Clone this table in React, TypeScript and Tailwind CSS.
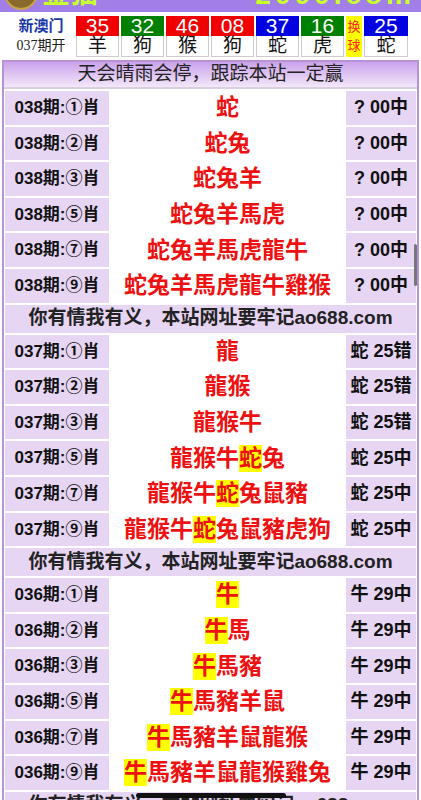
import React from "react";

type Ball = { n: string; a: string; c: string };

const balls: Ball[] = [
  { n: "35", a: "羊", c: "bg-[#f00000]" },
  { n: "32", a: "狗", c: "bg-[#008000]" },
  { n: "46", a: "猴", c: "bg-[#f00000]" },
  { n: "08", a: "狗", c: "bg-[#f00000]" },
  { n: "37", a: "蛇", c: "bg-[#0000e0]" },
  { n: "16", a: "虎", c: "bg-[#008000]" },
];

type Row = { label: string; pre?: string; hi?: string; rest: string; res: string };

const groups: { rows: Row[]; title: string }[] = [
  {
    rows: [
      { label: "038期:①肖", rest: "蛇", res: "? 00中" },
      { label: "038期:②肖", rest: "蛇兔", res: "? 00中" },
      { label: "038期:③肖", rest: "蛇兔羊", res: "? 00中" },
      { label: "038期:⑤肖", rest: "蛇兔羊馬虎", res: "? 00中" },
      { label: "038期:⑦肖", rest: "蛇兔羊馬虎龍牛", res: "? 00中" },
      { label: "038期:⑨肖", rest: "蛇兔羊馬虎龍牛雞猴", res: "? 00中" },
    ],
    title: "你有情我有义，本站网址要牢记ao688.com",
  },
  {
    rows: [
      { label: "037期:①肖", rest: "龍", res: "蛇 25错" },
      { label: "037期:②肖", rest: "龍猴", res: "蛇 25错" },
      { label: "037期:③肖", rest: "龍猴牛", res: "蛇 25错" },
      { label: "037期:⑤肖", pre: "龍猴牛", hi: "蛇", rest: "兔", res: "蛇 25中" },
      { label: "037期:⑦肖", pre: "龍猴牛", hi: "蛇", rest: "兔鼠豬", res: "蛇 25中" },
      { label: "037期:⑨肖", pre: "龍猴牛", hi: "蛇", rest: "兔鼠豬虎狗", res: "蛇 25中" },
    ],
    title: "你有情我有义，本站网址要牢记ao688.com",
  },
  {
    rows: [
      { label: "036期:①肖", hi: "牛", rest: "", res: "牛 29中" },
      { label: "036期:②肖", hi: "牛", rest: "馬", res: "牛 29中" },
      { label: "036期:③肖", hi: "牛", rest: "馬豬", res: "牛 29中" },
      { label: "036期:⑤肖", hi: "牛", rest: "馬豬羊鼠", res: "牛 29中" },
      { label: "036期:⑦肖", hi: "牛", rest: "馬豬羊鼠龍猴", res: "牛 29中" },
      { label: "036期:⑨肖", hi: "牛", rest: "馬豬羊鼠龍猴雞兔", res: "牛 29中" },
    ],
    title: "你有情我有义，本站网址要牢记ao688.com",
  },
];

const font = { fontFamily: '"Liberation Sans", "Noto Sans CJK SC", sans-serif' };

function DataRow({ r }: { r: Row }) {
  return (
    <div className="flex h-[33.6px] gap-[3px]">
      <div className="w-[104px] flex items-center justify-center bg-[#e6d5f3] text-[17px] font-bold text-[#111]">
        {r.label}
      </div>
      <div className="flex-1 flex items-center justify-center bg-white text-[23px] font-bold text-[#ee1111] leading-none">
        {r.pre}
        {r.hi && <span className="bg-[#ffff00] py-[2px]">{r.hi}</span>}
        {r.rest}
      </div>
      <div className="w-[70px] flex items-center justify-center bg-[#e6d5f3] text-[18px] font-bold text-[#111]">
        {r.res}
      </div>
    </div>
  );
}

export default function App() {
  return (
    <div className="relative w-[421px] h-[800px] overflow-hidden bg-white" style={font}>
      {/* top banner, mostly scrolled off */}
      <div className="relative h-[12px] bg-[#a27ee9] overflow-hidden">
        <div className="absolute left-[4px] top-[-24px] w-[34px] h-[34px] rounded-full bg-[#8a6a2a] border-2 border-[#c9a44a]" />
        <div className="absolute left-[42px] top-[-20px] text-[28px] font-bold text-[#c8ff2a] leading-none">
          金猫
        </div>
        <div className="absolute right-[6px] top-[-19px] text-[28px] font-bold tracking-[4px] text-[#c8ff2a] leading-none">
          2000.com
        </div>
      </div>

      {/* draw results */}
      <div className="flex items-center h-[48px] pl-[10px] gap-[4px]">
        <div className="w-[62px] flex flex-col items-center">
          <div className="text-[15px] font-bold text-[#1a37a8] leading-[20px]">新澳门</div>
          <div className="text-[14px] text-[#222] leading-[20px]" style={{ fontFamily: '"Liberation Serif", "Noto Sans CJK SC", serif' }}>
            037期开
          </div>
        </div>
        <div className="flex gap-[2px]">
          {balls.map((b, i) => (
            <div key={i} className="w-[43px] flex flex-col">
              <div className={`${b.c} h-[20px] text-white text-[21px] leading-[20px] text-center`}>{b.n}</div>
              <div className="h-[21px] border border-[#ccc] border-t-0 text-[19px] leading-[20px] text-center text-[#111]">
                {b.a}
              </div>
            </div>
          ))}
          <div className="w-[16px] h-[41px] bg-[#ffff00] text-[#ff2020] text-[13px] leading-[19px] flex flex-col items-center justify-center">
            <span>换</span>
            <span>球</span>
          </div>
          <div className="w-[44px] flex flex-col">
            <div className="bg-[#0000e0] h-[20px] text-white text-[21px] leading-[20px] text-center">25</div>
            <div className="h-[21px] border border-[#ccc] border-t-0 text-[19px] leading-[20px] text-center text-[#111]">
              蛇
            </div>
          </div>
        </div>
      </div>

      {/* table */}
      <div className="mx-[2px] border-2 border-[#b892d6] bg-white">
        <div className="h-[27px] flex items-center justify-center text-[19px] text-[#222] bg-gradient-to-b from-[#caa2ea] to-[#f3e8fa] border-b-2 border-[#d8d0de]">
          天会晴雨会停，跟踪本站一定赢
        </div>
        <div className="flex flex-col gap-[2px] p-[1px] pt-[2px]">
          {groups.map((g, gi) => (
            <React.Fragment key={gi}>
              {g.rows.map((r, ri) => (
                <DataRow key={ri} r={r} />
              ))}
              <div className="h-[28px] flex items-center justify-center bg-[#e6d5f3] text-[19px] font-bold text-[#222]">
                {g.title}
              </div>
            </React.Fragment>
          ))}
        </div>
      </div>

      {/* scroll indicator and home bar */}
      <div className="absolute right-[4px] top-[244px] w-[3px] h-[42px] rounded bg-[#777]" />
      <div className="absolute left-[136px] top-[793px] w-[150px] h-[5px] rounded-full bg-[#111]" />
    </div>
  );
}
